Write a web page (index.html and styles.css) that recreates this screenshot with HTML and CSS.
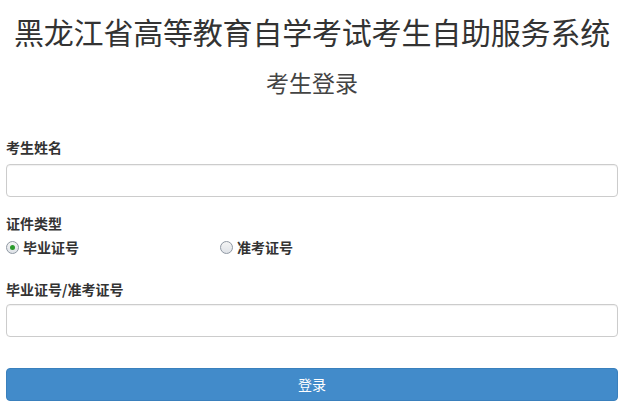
FILE: index.html
```html
<!DOCTYPE html>
<html lang="zh-CN">
<head>
<meta charset="utf-8">
<title>考生登录</title>
<link rel="stylesheet" href="styles.css">
</head>
<body>
<div class="page">
  <h1 class="title">黑龙江省高等教育自学考试考生自助服务系统</h1>
  <h2 class="subtitle">考生登录</h2>
  <form class="form">
    <label class="label label-name">考生姓名</label>
    <div class="input"></div>
    <label class="label label-type">证件类型</label>
    <div class="radios">
      <span class="radio-item"><span class="radio checked"></span><span class="radio-text">毕业证号</span></span>
      <span class="radio-item"><span class="radio"></span><span class="radio-text">准考证号</span></span>
    </div>
    <label class="label label-id">毕业证号/准考证号</label>
    <div class="input input-id"></div>
    <div class="btn">登录</div>
  </form>
</div>
</body>
</html>
```
FILE: styles.css
```css
html, body {
  margin: 0;
  padding: 0;
  background: #fff;
}
body {
  font-family: "Noto Sans CJK SC", "Liberation Sans", sans-serif;
  color: #333;
}
.page {
  padding: 0 9px 0 6px;
  display: flex;
  flex-direction: column;
}
.title {
  margin: 14px 0 0;
  font-size: 30px;
  line-height: 34px;
  font-weight: normal;
  text-align: center;
  color: #333;
  letter-spacing: -0.2px;
}
.subtitle {
  margin: 20px 0 0;
  font-size: 23px;
  line-height: 28px;
  font-weight: normal;
  text-align: center;
  color: #444;
}
.form {
  display: flex;
  flex-direction: column;
}
.label {
  font-size: 14px;
  line-height: 20px;
  font-weight: bold;
  color: #333;
}
.label-name { margin-top: 41px; }
.label-type { margin-top: 16px; }
.label-id { margin-top: 22px; }
.input {
  margin-top: 7px;
  height: 31px;
  border: 1px solid #ccc;
  border-radius: 4px;
  box-shadow: inset 0 1px 1px rgba(0,0,0,0.06);
  background: #fff;
}
.input-id { margin-top: 5px; }
.radios {
  margin-top: 4px;
  display: grid;
  grid-template-columns: 214px 1fr;
  height: 20px;
  align-items: center;
}
.radio-item {
  display: flex;
  align-items: center;
  gap: 4px;
}
.radio {
  width: 11px;
  height: 11px;
  border-radius: 50%;
  border: 1px solid #8f98a3;
  background: linear-gradient(#f4f4f4, #dfe3e8);
  display: flex;
  align-items: center;
  justify-content: center;
  box-sizing: content-box;
}
.radio.checked::after {
  content: "";
  width: 5px;
  height: 5px;
  border-radius: 50%;
  background: #2b9a2b;
}
.radio-text {
  font-size: 14px;
  line-height: 20px;
  font-weight: bold;
  color: #333;
}
.btn {
  margin-top: 31px;
  height: 33px;
  border-radius: 4px;
  background: #428bca;
  border: 1px solid #3a80bd;
  box-sizing: border-box;
  color: #fff;
  font-size: 14px;
  line-height: 30px;
  text-align: center;
}
```
